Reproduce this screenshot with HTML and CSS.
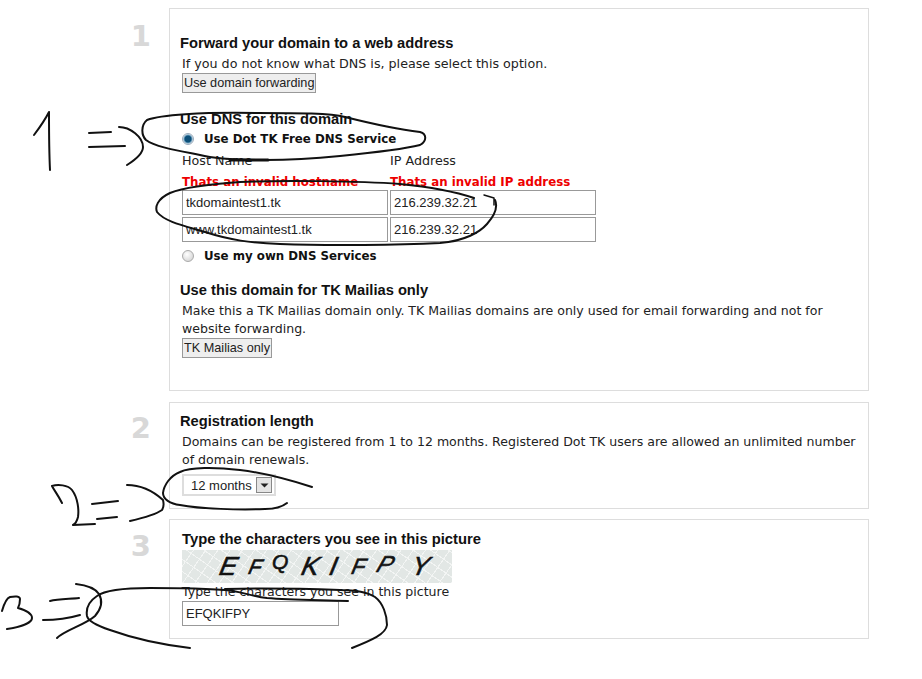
FILE: index.html
```html
<!DOCTYPE html>
<html lang="en">
<head>
<meta charset="utf-8">
<title>Domain configuration</title>
<link rel="stylesheet" href="styles.css">
</head>
<body>
<main class="page">
  <section class="step step-one">
    <div class="num">1</div>
    <div class="card">
      <h2 class="first">Forward your domain to a web address</h2>
      <p class="wide">If you do not know what DNS is, please select this option.</p>
      <button class="btn" type="button">Use domain forwarding</button>

      <h2 class="dns-title">Use DNS for this domain</h2>
      <label class="radio-row"><input class="radio" type="radio" name="dns" checked><span>Use Dot TK Free DNS Service</span></label>
      <div class="dns-grid">
        <span class="label">Host Name</span><span class="label">IP Address</span>
        <span class="error">Thats an invalid hostname</span><span class="error">Thats an invalid IP address</span>
        <input class="field" type="text" value="tkdomaintest1.tk"><input class="field" type="text" value="216.239.32.21">
        <input class="field" type="text" value="www.tkdomaintest1.tk"><input class="field" type="text" value="216.239.32.21">
      </div>
      <label class="radio-row own"><input class="radio" type="radio" name="dns"><span>Use my own DNS Services</span></label>

      <h2 class="mail-title">Use this domain for TK Mailias only</h2>
      <p>Make this a TK Mailias domain only. TK Mailias domains are only used for email forwarding and not for website forwarding.</p>
      <button class="btn" type="button">TK Mailias only</button>
    </div>
  </section>

  <section class="step step-two">
    <div class="num">2</div>
    <div class="card">
      <h2>Registration length</h2>
      <p>Domains can be registered from 1 to 12 months. Registered Dot TK users are allowed an unlimited number of domain renewals.</p>
      <div class="select"><span class="select-value">12 months</span><span class="drop"><svg width="9" height="5" viewBox="0 0 9 5"><path d="M0.5 0.5h8L4.500 4.500z" fill="#222"/></svg></span></div>
    </div>
  </section>

  <section class="step step-three">
    <div class="num">3</div>
    <div class="card">
      <h2 class="cap-title">Type the characters you see in this picture</h2>
      <div class="captcha">
        <span class="c c1">E</span><span class="c c2">F</span><span class="c c3">Q</span><span class="c c4">K</span><span class="c c5">I</span><span class="c c6">F</span><span class="c c7">P</span><span class="c c8">Y</span>
      </div>
      <p class="cap-label">Type the characters you see in this picture</p>
      <input class="field cap-field" type="text" value="EFQKIFPY">
    </div>
  </section>

  <svg class="ink" width="922" height="679" viewBox="0 0 922 679" aria-hidden="true">
    <g fill="none" stroke="#111" stroke-width="2" stroke-linecap="round" stroke-linejoin="round">
      <path d="M34 135C40 127 46 118 49 112C49 130 49 150 50 170"/>
      <path d="M89 133L111 132M89 147L125 146"/>
      <path d="M119 127C130 127 143 137 143 147C143 154 135 160 127 165"/>
      <path d="M147 120C160 115 200 112 257 113C300 113 330 113 345 117C365 122 395 129 420 132C427 134 427 141 420 145C400 150 370 153 340 156C310 159 285 160 265 160C240 160 215 159 200 155C180 151 155 147 146 140C141 135 141 125 147 120Z"/>
      <path d="M230 160H268" stroke-width="3"/>
      <path d="M474 198C450 190 420 186 400 184C360 181 280 180 240 182C210 184 185 187 170 193C157 199 155 207 157 212C165 222 185 226 205 232C230 240 250 243 280 244C330 246 400 245 440 243C465 241 480 232 487 224C495 215 498 207 495 200"/>
      <path d="M484 195L494 198L494 205" stroke-width="1.500"/>
      <path d="M62 503C58 495 54 490 52 486C58 484 68 485 72 490C78 498 79 510 78 517C77 521 75 524 73 525L95 524"/>
      <path d="M92 504L118 501M97 519L117 517"/>
      <path d="M127 485C140 485 152 490 163 500C164 504 164 507 162 510C155 515 143 518 130 521"/>
      <path d="M312 487C290 480 265 473 240 470C215 467 190 467 180 472C170 476 164 485 163 493C163 499 170 504 180 505C200 509 240 510 265 509C275 509 282 507 287 503"/>
      <path d="M2 611C4 604 7 598 10 597C15 596 20 596 20 599C20 604 19 606 18 608C25 610 32 613 32 618C32 623 20 627 7 629"/>
      <path d="M50 601C58 599 70 599 79 598M43 620C55 620 70 618 80 615"/>
      <path d="M76 584C85 585 95 588 99 594C103 601 101 609 95 616C85 625 65 630 57 638"/>
      <path d="M348 601C320 600 290 600 267 598C250 596 240 591 225 590C200 588 170 588 150 588C125 588 105 590 97 596C88 602 86 610 87 616C88 621 95 625 110 630C135 639 165 645 190 648"/>
      <path d="M225 589C270 588 310 589 340 590C355 590 367 592 375 597C383 603 387 615 387 625C386 634 372 640 352 648"/>
    </g>
  </svg>
</main>
</body>
</html>
```
FILE: styles.css
```css
html, body {
  margin: 0;
  padding: 0;
  background: #fff;
}
body {
  font-family: "DejaVu Sans", Verdana, sans-serif;
  font-size: 12.7px;
  line-height: 18px;
  color: #222;
}
.page {
  position: relative;
  width: 922px;
  height: 679px;
  padding-top: 8px;
  box-sizing: border-box;
  overflow: hidden;
}
.step {
  display: grid;
  grid-template-columns: 169px 700px;
}
.step-two { margin-top: 11px; }
.step-three { margin-top: 10px; }
.num {
  font-weight: bold;
  font-size: 29px;
  line-height: 34px;
  color: #d8d8d8;
  text-align: right;
  padding: 11px 18px 0 0;
}
.step-two .num { padding-top: 9px; }
.step-three .num { padding-top: 10px; }
.card {
  border: 1px solid #ddd;
  padding: 0 12px;
  box-sizing: border-box;
}
.step-one .card { height: 383px; }
.step-two .card { height: 107px; }
.step-three .card { height: 120px; }
h2 {
  margin: 0 0 0 -2px;
  font: bold 14.7px/18px "Liberation Sans", Arial, sans-serif;
  color: #111;
  padding-top: 9px;
}
h2.first { padding-top: 25px; }
h2.dns-title { padding-top: 17px; }
h2.mail-title { padding-top: 14px; }
h2.cap-title { margin: 0 0 2px; padding-top: 10px; font-size: 14.8px; }
p { margin: 3px 0 0; font-size: 12.55px; }
p.wide { font-size: 12.7px; }
.btn {
  display: block;
  height: 20px;
  margin: 0;
  padding: 0 1px;
  border: 1px solid #999;
  background: #eee;
  font: 12.7px/16px "Liberation Sans", Arial, sans-serif;
  color: #222;
}
.radio-row {
  display: flex;
  align-items: center;
  height: 22px;
  font-size: 11.8px;
  font-weight: bold;
  color: #111;
}
.radio-row span { margin-left: 10px; }
.radio {
  appearance: none;
  -webkit-appearance: none;
  width: 12px;
  height: 12px;
  margin: 0;
  border-radius: 50%;
  border: 1px solid #aaa;
  box-sizing: border-box;
  background: radial-gradient(circle at 40% 35%, #fff, #ccc);
}
.radio:checked {
  background: radial-gradient(circle, #0c4f78 0 3px, #6a9fbf 4px, #dfe6ea 5px);
  border-color: #9ab;
}
.dns-grid {
  display: grid;
  grid-template-columns: 206px 206px;
  column-gap: 2px;
  margin-top: 1px;
}
.label { height: 21px; line-height: 20px; }
.error {
  height: 18px;
  line-height: 20px;
  font-size: 11.8px;
  font-weight: bold;
  color: #e00;
}
.dns-grid .field { margin-bottom: 2px; }
.field {
  display: block;
  box-sizing: border-box;
  width: 206px;
  height: 25px;
  margin: 0;
  padding: 0 3px;
  border: 1px solid #999;
  background: #fff;
  font: 13px "Liberation Sans", Arial, sans-serif;
  color: #222;
  outline: none;
}
.own { margin-top: 1px; }
.select {
  display: flex;
  align-items: center;
  justify-content: space-between;
  box-sizing: border-box;
  width: 94px;
  height: 22px;
  margin-top: 5px;
  padding: 0 2px 0 7px;
  border: 2px solid #ddd;
  font: 13px "Liberation Sans", Arial, sans-serif;
  color: #222;
}
.select-value { white-space: nowrap; }
.drop {
  display: flex;
  align-items: center;
  justify-content: center;
  width: 16px;
  height: 16px;
  box-sizing: border-box;
  border: 1px solid #888;
  background: #e4e4e4;
}
.captcha {
  display: flex;
  align-items: center;
  width: 270px;
  height: 33px;
  padding-left: 38px;
  box-sizing: border-box;
  background-color: #e2e7e5;
  background-image:
    repeating-linear-gradient(35deg, transparent 0 9px, #f3f5f4 9px 10px),
    repeating-linear-gradient(125deg, transparent 0 9px, #f3f5f4 9px 10px);
}
.c {
  display: block;
  flex: none;
  font: italic 26px/33px "Liberation Sans", Arial, sans-serif;
  -webkit-text-stroke: 0.6px #111;
  color: #111;
  transform: skewX(-12deg);
}
.c1 { width: 29px; }
.c2 { width: 23px; font-size: 21px; }
.c3 { width: 30px; font-size: 21px; transform: translateY(-5px); }
.c4 { width: 28px; }
.c5 { width: 22px; }
.c6 { width: 26px; font-size: 22px; }
.c7 { width: 34px; font-size: 23px; transform: translateY(-2px) skewX(-20deg); }
.c8 { width: 20px; }
.cap-label { margin: 0; height: 18px; line-height: 18px; }
.cap-field { width: 157px; }
.ink {
  position: absolute;
  top: 0;
  left: 0;
  pointer-events: none;
}
```
